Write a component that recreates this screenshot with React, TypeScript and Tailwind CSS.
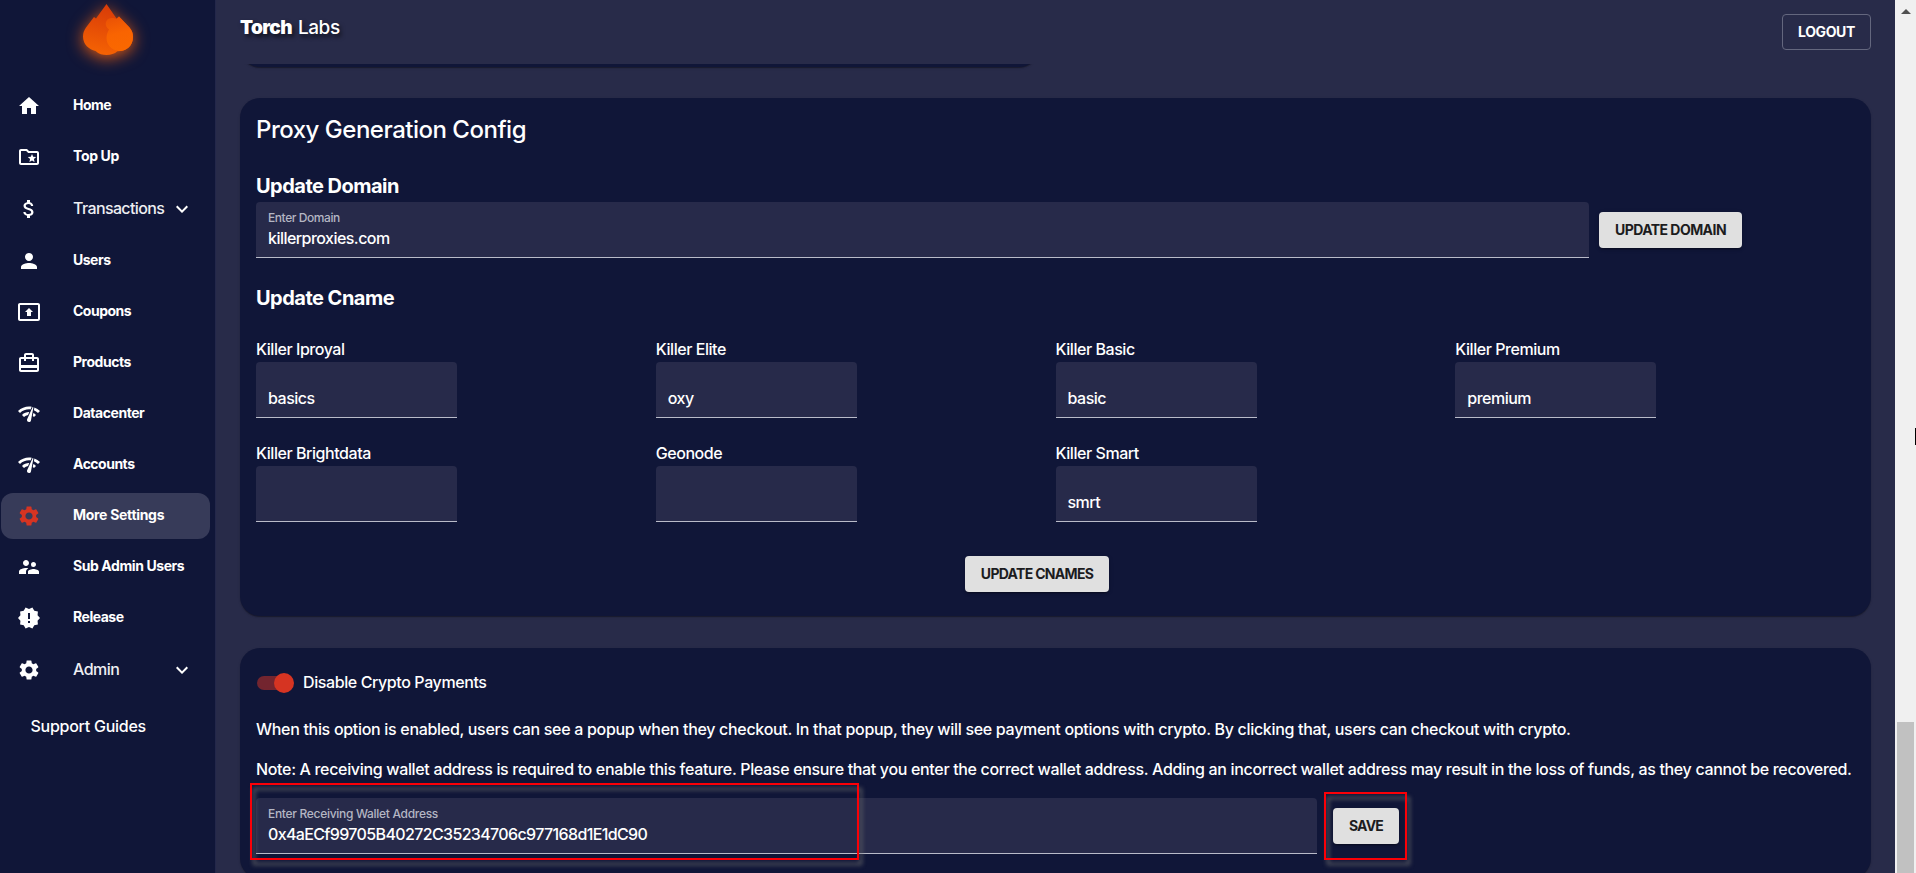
import type { ReactNode } from 'react';
import type { IconType } from 'react-icons';
import {
  MdHome,
  MdOutlineFolderSpecial,
  MdAttachMoney,
  MdPerson,
  MdOutlinePresentToAll,
  MdCardTravel,
  MdNetworkCheck,
  MdSettings,
  MdSupervisorAccount,
  MdNewReleases,
  MdExpandMore,
} from 'react-icons/md';

type NavEntry = {
  label: string;
  icon: IconType;
  track: string;
  active?: boolean;
  group?: boolean;
};

const nav: NavEntry[] = [
  { label: 'Home', icon: MdHome, track: 'tracking-[-0.5px]' },
  { label: 'Top Up', icon: MdOutlineFolderSpecial, track: 'tracking-[-0.34px]' },
  { label: 'Transactions', icon: MdAttachMoney, track: 'tracking-[-0.62px]', group: true },
  { label: 'Users', icon: MdPerson, track: 'tracking-[-0.5px]' },
  { label: 'Coupons', icon: MdOutlinePresentToAll, track: 'tracking-[-0.5px]' },
  { label: 'Products', icon: MdCardTravel, track: 'tracking-[-0.48px]' },
  { label: 'Datacenter', icon: MdNetworkCheck, track: 'tracking-[-0.46px]' },
  { label: 'Accounts', icon: MdNetworkCheck, track: 'tracking-[-0.5px]' },
  { label: 'More Settings', icon: MdSettings, track: 'tracking-[-0.3px]', active: true },
  { label: 'Sub Admin Users', icon: MdSupervisorAccount, track: 'tracking-[-0.42px]' },
  { label: 'Release', icon: MdNewReleases, track: 'tracking-[-0.48px]' },
  { label: 'Admin', icon: MdSettings, track: 'tracking-[-0.5px]', group: true },
];

const cnames = [
  { label: 'Killer Iproyal', value: 'basics' },
  { label: 'Killer Elite', value: 'oxy' },
  { label: 'Killer Basic', value: 'basic' },
  { label: 'Killer Premium', value: 'premium' },
  { label: 'Killer Brightdata', value: '' },
  { label: 'Geonode', value: '' },
  { label: 'Killer Smart', value: 'smrt' },
];

function Flame() {
  return (
    <svg
      viewBox="0 0 50 52"
      className="h-[52px] w-[50px] drop-shadow-[0_3px_8px_rgba(255,100,10,0.85)]"
    >
      <defs>
        <linearGradient id="flameBack" x1="0.6" y1="0" x2="0.4" y2="1">
          <stop offset="0" stopColor="#d63a08" />
          <stop offset="0.45" stopColor="#e44b06" />
          <stop offset="1" stopColor="#f56303" />
        </linearGradient>
        <linearGradient id="flameFront" x1="0.3" y1="0" x2="0.5" y2="1">
          <stop offset="0" stopColor="#ea5205" />
          <stop offset="0.5" stopColor="#f96401" />
          <stop offset="1" stopColor="#fa6800" />
        </linearGradient>
      </defs>
      <path
        d="M23.5 0L13 14.5L11 13L3 23.500C1 26.500 0 29 0 32.500C0 40.500 6 45.500 12.500 47C16 50 19.500 51 23.500 51C28 51 31.500 50 34.500 47.300C43 47.500 50 42 50 33C50 29 49 26.500 46.500 23.500L36 12.500L33.500 14.500Z"
        fill="url(#flameBack)"
      />
      <path
        d="M36 12.500L46.500 23.500C49 26.500 50 29 50 33C50 42 43 47.500 36 47C29 46.500 23.500 41 23.500 34C23.500 30 25 27.500 26 25.500C21 22 22 15 27.500 14.200C30 13.800 31.500 14.500 33.500 15Z"
        fill="url(#flameFront)"
      />
    </svg>
  );
}

function Sidebar() {
  return (
    <aside className="flex w-[216px] shrink-0 flex-col border-r border-[#23274a] bg-[#101638]">
      <div className="flex h-[83px] justify-center pt-1">
        <Flame />
      </div>
      <nav className="flex flex-col gap-[5px] pl-px pr-[5px]">
        {nav.map((item) => {
          const Icon = item.icon;
          return (
            <a
              key={item.label}
              className={`flex items-center rounded-xl pl-4 pr-4 ${item.group ? 'h-12' : 'h-[46px]'} ${
                item.active ? 'bg-[#373b59]' : ''
              }`}
            >
              <Icon className={`size-6 shrink-0 ${item.active ? 'text-[#d63422]' : 'text-white'}`} />
              <span
                className={`ml-8 grow pb-[3px] ${
                  item.group ? 'text-base font-medium text-[#eeeef2]' : 'text-sm font-bold'
                } ${item.track}`}
              >
                {item.label}
              </span>
              {item.group && <MdExpandMore className="size-6 shrink-0" />}
            </a>
          );
        })}
      </nav>
      <a className="mt-5 pl-[30.5px] text-base font-medium tracking-[-0.26px]">Support Guides</a>
    </aside>
  );
}

function ContainedButton({ className, children }: { className: string; children: ReactNode }) {
  return (
    <button
      className={`h-9 shrink-0 rounded bg-[#e0e0e0] text-center text-sm font-bold text-[#1c1c1e] shadow-[0_3px_1px_-2px_rgba(0,0,0,0.2),0_2px_2px_rgba(0,0,0,0.14),0_1px_5px_rgba(0,0,0,0.12)] ${className}`}
    >
      {children}
    </button>
  );
}

function Field({
  label,
  value,
  className,
  labelTrack = '',
  valueTrack = 'tracking-[-0.5px]',
}: {
  label?: string;
  value: string;
  className: string;
  labelTrack?: string;
  valueTrack?: string;
}) {
  return (
    <div
      className={`flex h-14 flex-col rounded-t border-b border-[#b9bbc9] bg-[#272a4a] pl-3 ${className}`}
    >
      {label && (
        <span className={`mt-2 h-4 text-xs leading-4 font-medium text-[#b4b6c3] ${labelTrack}`}>
          {label}
        </span>
      )}
      <span
        className={`text-base leading-[23px] font-medium ${label ? 'mt-px' : 'mt-[25px]'} ${valueTrack}`}
      >
        {value}
      </span>
    </div>
  );
}

const cardShadow =
  'shadow-[0_2px_1px_-1px_rgba(0,0,0,0.2),0_1px_1px_rgba(0,0,0,0.14),0_1px_3px_rgba(0,0,0,0.12)]';

function ProxyConfig() {
  return (
    <section className={`h-[518px] shrink-0 rounded-[20px] bg-[#101638] px-4 pt-4 ${cardShadow}`}>
      <h1 className="text-2xl leading-[31px] font-medium tracking-[-0.49px]">
        Proxy Generation Config
      </h1>
      <h2 className="mt-[27px] text-xl leading-[29px] font-bold tracking-[-0.52px]">Update Domain</h2>
      <div className="mt-px flex items-center gap-2.5">
        <Field
          label="Enter Domain"
          value="killerproxies.com"
          className="w-[1333px]"
          labelTrack="tracking-[-0.42px]"
          valueTrack="tracking-[-0.54px]"
        />
        <ContainedButton className="w-[143px] tracking-[-0.55px]">UPDATE DOMAIN</ContainedButton>
      </div>
      <h2 className="mt-[26px] text-xl leading-[29px] font-bold tracking-[-0.52px]">Update Cname</h2>
      <div className="mt-[25px] grid grid-cols-4 gap-y-6">
        {cnames.map((c) => (
          <div key={c.label}>
            <label className="block text-base leading-[23px] font-medium tracking-[-0.45px]">
              {c.label}
            </label>
            <Field value={c.value} className="mt-px w-[201px]" />
          </div>
        ))}
      </div>
      <div className="mt-[34px] flex justify-center pr-[37px]">
        <ContainedButton className="w-36 tracking-[-0.7px]">UPDATE CNAMES</ContainedButton>
      </div>
    </section>
  );
}

function HighlightFrame({ className }: { className: string }) {
  return (
    <div
      className={`pointer-events-none absolute border-2 border-[#fb0007] drop-shadow-[3px_5px_2px_rgba(110,110,110,0.9)] ${className}`}
    />
  );
}

function CryptoPayments() {
  return (
    <section
      className={`mt-8 h-[230px] shrink-0 rounded-[20px] bg-[#101638] px-4 pt-4 ${cardShadow}`}
    >
      <div className="flex h-[38px] items-center">
        <span className="ml-px flex h-3.5 w-[34px] items-center justify-end rounded-full bg-[#73252f]">
          <span className="-mr-[3px] size-5 shrink-0 rounded-full bg-[#d63422]" />
        </span>
        <span className="ml-3 pb-0.5 text-base font-medium tracking-[-0.4px]">
          Disable Crypto Payments
        </span>
      </div>
      <p className="mt-4 text-base leading-[23px] font-medium whitespace-nowrap tracking-[-0.308px]">
        When this option is enabled, users can see a popup when they checkout. In that popup, they
        will see payment options with crypto. By clicking that, users can checkout with crypto.
      </p>
      <p className="mt-[17px] text-base leading-[23px] font-medium whitespace-nowrap tracking-[-0.33px]">
        Note: A receiving wallet address is required to enable this feature. Please ensure that you
        enter the correct wallet address. Adding an incorrect wallet address may result in the loss
        of funds, as they cannot be recovered.
      </p>
      <div className="mt-[17px] flex items-center gap-4">
        <div className="relative">
          <Field
            label="Enter Receiving Wallet Address"
            value="0x4aECf99705B40272C35234706c977168d1E1dC90"
            className="w-[1061px]"
            labelTrack="tracking-[-0.3px]"
            valueTrack="tracking-[-0.64px]"
          />
          <HighlightFrame className="-top-[15px] -left-1.5 h-[77px] w-[609px]" />
        </div>
        <div className="relative">
          <ContainedButton className="block w-[66px] tracking-[-0.8px]">SAVE</ContainedButton>
          <HighlightFrame className="-top-4 -left-[9px] h-[68px] w-[83px]" />
        </div>
      </div>
    </section>
  );
}

export default function App() {
  return (
    <div className="flex h-[873px] w-[1916px] overflow-hidden bg-[#282b49] font-['Inter','Liberation_Sans',sans-serif] text-white">
      <Sidebar />
      <main className="flex min-w-0 grow flex-col pr-6 pl-6">
        <header className="flex h-16 shrink-0 items-start justify-between">
          <div className="flex gap-[6px] pt-3.5 text-[19px] leading-7 [text-shadow:2px_3px_4px_rgba(0,0,0,0.65)]">
            <span className="font-black tracking-[-0.6px]">Torch</span>
            <span className="font-medium tracking-[-0.42px]">Labs</span>
          </div>
          <button className="mt-3.5 h-9 w-[89px] rounded border border-[#64677e] text-sm font-bold tracking-[-0.37px]">
            LOGOUT
          </button>
        </header>
        <div className="h-[34px] shrink-0 overflow-hidden">
          <div className={`-mt-[37px] h-10 w-[799px] rounded-[20px] bg-[#101638] ${cardShadow}`} />
        </div>
        <ProxyConfig />
        <CryptoPayments />
      </main>
      <div className="relative flex w-[21px] shrink-0 flex-col items-center bg-[#f0f0f0]">
        <svg viewBox="0 0 10 5" className="mt-[9px] h-[5px] w-[10px]">
          <path d="M0 5L5 0L10 5Z" fill="#505050" />
        </svg>
        <div className="mt-[708px] h-[151px] w-[17px] bg-[#c1c1c1]" />
        <div className="absolute top-[428px] right-0 h-[17px] w-px bg-black" />
      </div>
    </div>
  );
}
